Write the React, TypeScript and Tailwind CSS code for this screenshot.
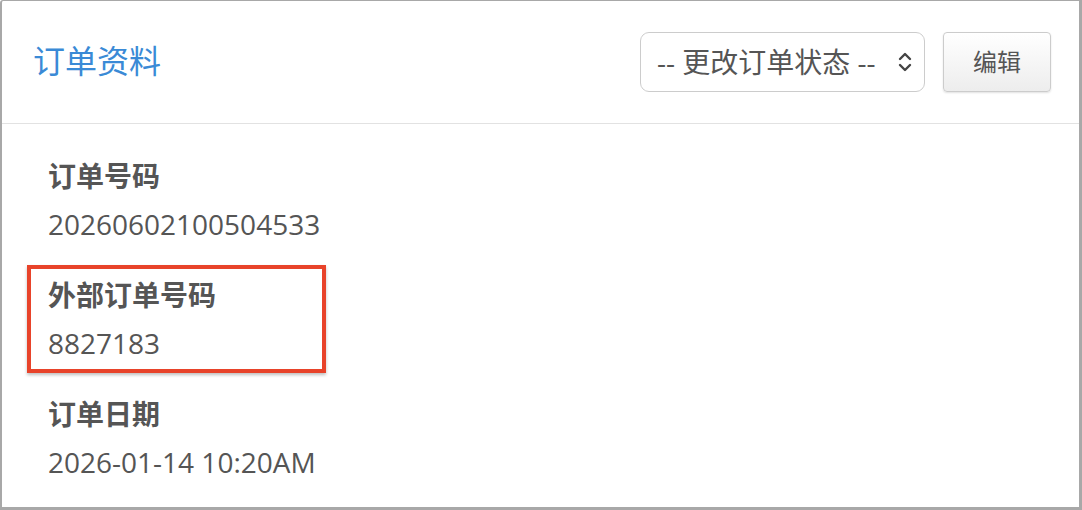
import React from "react";

const font = { fontFamily: '"Open Sans", "Noto Sans CJK SC", sans-serif' };

function Chevrons() {
  return (
    <svg width="16" height="22" viewBox="0 0 16 22" fill="none" stroke="#444" strokeWidth="2.4" strokeLinecap="round" strokeLinejoin="round">
      <path d="M3 8 L8 3 L13 8" />
      <path d="M3 14 L8 19 L13 14" />
    </svg>
  );
}

function Field({ label, value }: { label: string; value: string }) {
  return (
    <div className="flex flex-col">
      <div className="text-[28px] leading-[40px] font-bold text-[#555555]">{label}</div>
      <div className="mt-2 text-[28px] leading-[40px] text-[#555555]">{value}</div>
    </div>
  );
}

export default function App() {
  return (
    <div style={font} className="w-[1082px] h-[510px] bg-white">
      <div className="relative w-full h-full box-border border-t border-l-2 border-r-[3px] border-b-[3px] border-[#a8a8a8] rounded-tl-[3px] bg-white overflow-hidden">
        <div className="h-[123px] flex items-center justify-between pl-[31px] pr-[28px] border-b border-[#e2e2e2]">
          <div className="text-[32px] leading-[40px] text-[#3a8ad6] pb-[2px]">订单资料</div>
          <div className="flex items-center gap-[18px]">
            <div className="w-[285px] h-[60px] box-border border border-[#cccccc] rounded-[9px] bg-white flex items-center justify-between pl-[16px] pr-[11px]">
              <span className="text-[28px] leading-[40px] text-[#555555]">-- 更改订单状态 --</span>
              <Chevrons />
            </div>
            <div className="w-[108px] h-[60px] box-border border border-[#cccccc] rounded-[4px] bg-gradient-to-b from-white to-[#ededed] shadow-[0_1px_2px_rgba(0,0,0,0.12)] flex items-center justify-center">
              <span className="text-[24px] leading-[32px] text-[#555555]">编辑</span>
            </div>
          </div>
        </div>
        <div className="flex flex-col gap-[31px] pl-[46px] pt-[32px]">
          <Field label="订单号码" value="20260602100504533" />
          <Field label="外部订单号码" value="8827183" />
          <Field label="订单日期" value="2026-01-14 10:20AM" />
        </div>
        <div className="absolute left-[25px] top-[264px] w-[299px] h-[108px] border-[4px] border-[#e8432a] shadow-[0_2px_3px_rgba(0,0,0,0.25)]" />
      </div>
    </div>
  );
}
